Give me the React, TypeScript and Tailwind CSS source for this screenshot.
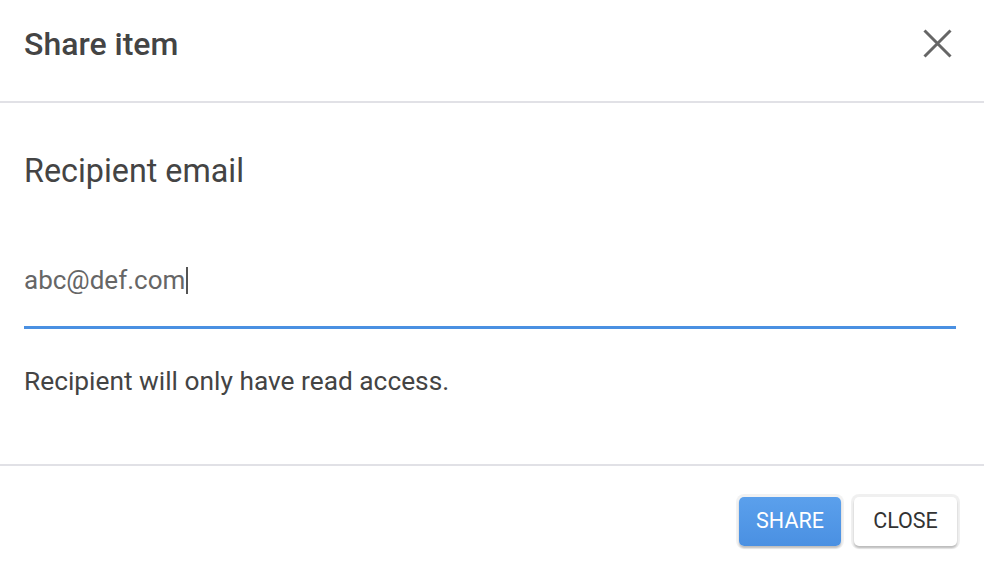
import React from "react";

export default function App() {
  return (
    <div
      className="w-[984px] h-[568px] bg-white flex flex-col overflow-hidden"
      style={{ fontFamily: "Roboto, 'Liberation Sans', sans-serif" }}
    >
      <div className="h-[103px] shrink-0 flex items-center justify-between pl-6 pr-[32px] border-b-2 border-[#e1e1e6]">
        <h1 className="text-[32px] leading-[38px] font-medium text-[#444] -mt-[13px]">Share item</h1>
        <svg width="29" height="29" viewBox="0 0 29 29" className="-mt-[14px]">
          <path d="M1.5 1.5 L27.5 27.5 M27.5 1.5 L1.5 27.5" stroke="#666" strokeWidth="3" strokeLinecap="butt" />
        </svg>
      </div>
      <div className="flex flex-col px-6 pt-[49px] pb-[68px] border-b-2 border-[#e1e1e6]">
        <div className="text-[32.3px] leading-[38px] text-[#444]">Recipient email</div>
        <div className="mt-[75px] border-b-[3px] border-[#4a90e2] pb-[31px] w-[932px]">
          <div className="flex items-center h-[30px] text-[26px] leading-[30px] text-[#666]">
            <span>abc@def.com</span>
            <span className="inline-block w-[2px] h-[27px] bg-[#555] ml-[1px]" />
          </div>
        </div>
        <div className="mt-[37px] text-[26.3px] leading-[30px] text-[#444]">
          Recipient will only have read access.
        </div>
      </div>
      <div className="flex justify-end gap-[13px] pt-[31px] pr-[27px]">
        <button className="w-[102px] h-[49px] rounded-[5px] bg-gradient-to-b from-[#5ba0ec] to-[#4a90e2] text-white text-[21.5px] shadow-[0_0_0_3px_rgba(0,0,0,0.05),0_2px_2px_rgba(0,0,0,0.22)]">
          SHARE
        </button>
        <button className="w-[103px] h-[49px] rounded-[5px] bg-white text-[#333] text-[21.5px] shadow-[0_0_0_3px_rgba(0,0,0,0.06),0_2px_2px_rgba(0,0,0,0.22)]">
          CLOSE
        </button>
      </div>
    </div>
  );
}
